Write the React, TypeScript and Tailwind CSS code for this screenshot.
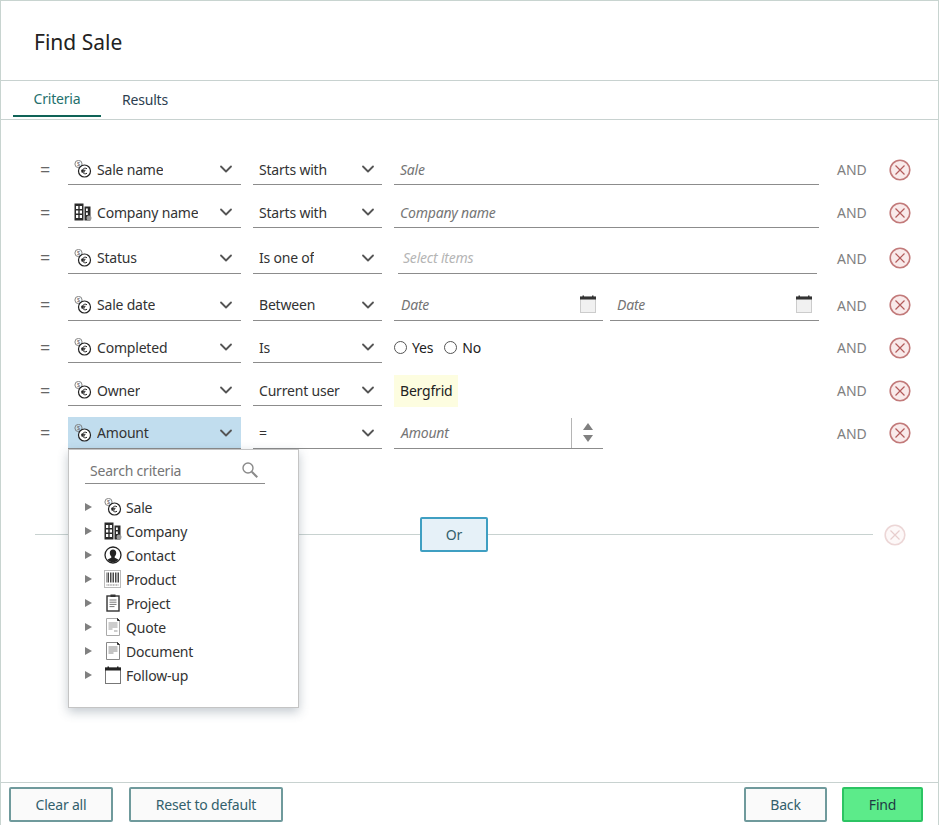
import { ChevronDown } from 'lucide-react'
import type { ReactNode } from 'react'

function CoinsIcon() {
  return (
    <svg width="18" height="18" viewBox="0 0 18 18" className="shrink-0" fill="none">
      <circle cx="4.500" cy="4" r="3.600" stroke="#777" strokeWidth="0.900" />
      <text x="4.500" y="6" fontSize="5.500" textAnchor="middle" fill="#666" fontFamily="Liberation Sans, sans-serif">$</text>
      <circle cx="10.500" cy="11" r="6" fill="#fff" stroke="#222" strokeWidth="1.200" />
      <path d="M13 8.800a2.800 2.800 0 0 0-4.400 1.200v2a2.800 2.800 0 0 0 4.400 1.200M7 10.300h4.500M7 11.800h4" stroke="#222" strokeWidth="1" />
    </svg>
  )
}

function BuildingIcon() {
  return (
    <svg width="18" height="18" viewBox="0 0 18 18" className="shrink-0">
      <path d="M0.500 0.500h9v17h-9z" fill="#2b2b2b" />
      <path d="M10.500 3.500h6v14h-6z" fill="#2b2b2b" />
      <path d="M2 3h2.300v3H2zM5.700 3H8v3H5.700zM2 7.500h2.300v3H2zM5.700 7.500H8v3H5.700zM2 12h2.300v3H2zM5.700 12H8v3H5.700zM12 5.500h1.800v2.500H12zM12 9.500h1.800V12H12z" fill="#fff" />
      <circle cx="15" cy="15" r="2.500" fill="#999" />
    </svg>
  )
}

function ContactIcon() {
  return (
    <svg width="18" height="18" viewBox="0 0 18 18" className="shrink-0">
      <circle cx="9" cy="9" r="8" fill="#fff" stroke="#222" strokeWidth="1.300" />
      <path d="M9 3.500c2 0 3.200 1.500 3.200 3.500 0 1.500-.7 2.800-1.500 3.500v1.200c1.500.5 3 1.200 3.800 2.300a8 8 0 0 1-11 0c.8-1.100 2.300-1.800 3.800-2.300v-1.200C6.500 9.800 5.800 8.500 5.800 7c0-2 1.200-3.500 3.200-3.500z" fill="#222" />
    </svg>
  )
}

function BarcodeIcon() {
  return (
    <svg width="18" height="18" viewBox="0 0 18 18" className="shrink-0">
      <rect x="0.500" y="0.500" width="16" height="17" fill="#fff" stroke="#bbb" />
      <path d="M3 2.500v10M4.500 2.500v10M6.500 2.500v10M8 2.500v10M9.500 2.500v10M11.500 2.500v10M13 2.500v10M14.500 2.500v10" stroke="#333" strokeWidth="0.900" />
      <path d="M2.500 15h12" stroke="#777" strokeWidth="1.200" strokeDasharray="1 0.600" />
    </svg>
  )
}

function ProjectIcon() {
  return (
    <svg width="18" height="18" viewBox="0 0 18 18" className="shrink-0" fill="none">
      <rect x="3" y="2" width="12" height="15" fill="#fff" stroke="#333" strokeWidth="1.400" />
      <rect x="6.500" y="0.500" width="5" height="2.500" fill="#333" />
      <path d="M5.500 6h7M5.500 8.200h7M5.500 10.400h7M5.500 12.600h5" stroke="#777" />
    </svg>
  )
}

function QuoteIcon() {
  return (
    <svg width="18" height="18" viewBox="0 0 18 18" className="shrink-0" fill="none">
      <path d="M2.500.500h11l2 2v15h-13z" fill="#fff" stroke="#aaa" />
      <path d="M13.500 .500l2 2h-2z" fill="#333" stroke="#333" />
      <path d="M4.500 5h9M4.500 7h9M4.500 9h9M4.500 11h4M10 13h3.500" stroke="#999" />
    </svg>
  )
}

function DocumentIcon() {
  return (
    <svg width="18" height="18" viewBox="0 0 18 18" className="shrink-0" fill="none">
      <path d="M2.500.500h11l2 2v15h-13z" fill="#fff" stroke="#888" />
      <path d="M13.500 .500l2 2h-2z" fill="#333" stroke="#333" />
      <path d="M4.500 5h9M4.500 7h9M4.500 9h9M4.500 11h5" stroke="#888" />
    </svg>
  )
}

function FollowUpIcon() {
  return (
    <svg width="18" height="18" viewBox="0 0 18 18" className="shrink-0" fill="none">
      <rect x="1.500" y="2" width="15" height="15.500" fill="#fff" stroke="#777" />
      <rect x="1" y="1.500" width="16" height="3" fill="#222" />
      <rect x="3.500" y="0.500" width="1.500" height="2" fill="#222" />
      <rect x="13" y="0.500" width="1.500" height="2" fill="#222" />
    </svg>
  )
}

function CalendarIcon() {
  return (
    <svg width="16" height="18" viewBox="0 0 16 18" className="shrink-0">
      <rect x="0.500" y="2" width="15" height="15.500" fill="#f1f1f1" stroke="#ccc" />
      <rect x="0" y="1.500" width="16" height="3" fill="#333" />
      <rect x="2.500" y="0.500" width="1.500" height="2" fill="#333" />
      <rect x="12" y="0.500" width="1.500" height="2" fill="#333" />
    </svg>
  )
}

function RemoveIcon({ faded }: { faded?: boolean }) {
  return (
    <svg width="22" height="22" viewBox="0 0 22 22" fill="none" className={faded ? 'opacity-30' : ''}>
      <circle cx="11" cy="11" r="9.800" fill="#f9eaea" stroke="#c27a7a" strokeWidth="1.600" />
      <path d="M6.500 6.500l9 9M15.500 6.500l-9 9" stroke="#b35c5c" strokeWidth="1.200" />
    </svg>
  )
}

function Field({ width, children, active }: { width: string; children: ReactNode; active?: boolean }) {
  return (
    <div className={`flex h-full items-center border-b border-[#8c8c8c] ${width} ${active ? 'bg-[#c1ddee]' : ''}`}>
      {children}
    </div>
  )
}

function Select({ width, icon, label, active }: { width: string; icon?: ReactNode; label: string; active?: boolean }) {
  return (
    <Field width={width} active={active}>
      <div className={`flex min-w-0 flex-1 items-center gap-[5px] ${icon ? 'pl-[6px]' : 'pl-[6px]'}`}>
        {icon}
        <span className="truncate text-[#333]">{label}</span>
      </div>
      <ChevronDown size={20} strokeWidth={2.200} className={`shrink-0 text-[#555] ${icon ? 'mr-[5px]' : 'mr-[4px]'}`} />
    </Field>
  )
}

function TextValue({ placeholder }: { placeholder: string }) {
  return (
    <Field width="w-[425px]">
      <span className="pl-[6px] italic text-[#757575]">{placeholder}</span>
    </Field>
  )
}

function DateValue() {
  return (
    <div className="flex h-full w-[425px] gap-[7px]">
      {[0, 1].map((i) => (
        <Field key={i} width="w-[209px]">
          <span className="flex-1 pl-[7px] italic text-[#757575]">Date</span>
          <span className="mr-[7px] mb-[2px]"><CalendarIcon /></span>
        </Field>
      ))}
    </div>
  )
}

function Radio({ label }: { label: string }) {
  return (
    <span className="flex items-center gap-[5px]">
      <span className="h-[13px] w-[13px] rounded-full border border-[#555] bg-white" />
      <span className="text-[#222]">{label}</span>
    </span>
  )
}

function Row({ rowClass, first, second, value, firstIcon = <CoinsIcon />, active }: {
  rowClass: string
  first: string
  second: string
  value: ReactNode
  firstIcon?: ReactNode
  active?: boolean
}) {
  return (
    <div className={`flex items-stretch ${rowClass}`}>
      <span className="w-[67px] self-center pb-[2px] pl-[39px] text-[18px] leading-none text-[#666]">=</span>
      <Select width="w-[173px]" icon={firstIcon} label={first} active={active} />
      <div className="ml-[12px]"><Select width="w-[129px]" label={second} /></div>
      <div className="ml-[12px] w-[425px]">{value}</div>
      <span className="ml-[18px] w-[52px] self-center tracking-normal text-[#808080]">AND</span>
      <span className="self-center"><RemoveIcon /></span>
    </div>
  )
}

const TREE = [
  { label: 'Sale', icon: <CoinsIcon /> },
  { label: 'Company', icon: <BuildingIcon /> },
  { label: 'Contact', icon: <ContactIcon /> },
  { label: 'Product', icon: <BarcodeIcon /> },
  { label: 'Project', icon: <ProjectIcon /> },
  { label: 'Quote', icon: <QuoteIcon /> },
  { label: 'Document', icon: <DocumentIcon /> },
  { label: 'Follow-up', icon: <FollowUpIcon /> },
]

function CriteriaMenu() {
  return (
    <div className="absolute top-[448px] left-[67px] h-[259px] w-[231px] border border-[#c4c4c4] bg-white px-[16px] pt-[7px] shadow-[0_4px_10px_rgba(60,80,100,0.3)]">
      <div className="flex h-[27px] w-[180px] items-center justify-between border-b border-[#8c8c8c] pr-[6px] pl-[5px]">
        <span className="text-[#757575]">Search criteria</span>
        <svg width="18" height="18" viewBox="0 0 18 18" fill="none" stroke="#8a8a8a" strokeWidth="1.400">
          <circle cx="7" cy="7" r="5" />
          <path d="M10.800 10.800l5.500 5.500" strokeWidth="2" />
        </svg>
      </div>
      <ul className="mt-[11px]">
        {TREE.map((item) => (
          <li key={item.label} className="flex h-[24px] items-center">
            <span className="h-0 w-0 border-y-[4.500px] border-l-[7px] border-y-transparent border-l-[#808080]" />
            <span className="mr-[3px] ml-[11px] flex w-[20px] justify-center">{item.icon}</span>
            <span className="text-[#333]">{item.label}</span>
          </li>
        ))}
      </ul>
    </div>
  )
}

function FooterButton({ label, width, primary }: { label: string; width: string; primary?: boolean }) {
  return (
    <button className={`h-[35px] rounded-[2px] border-2 ${width} ${primary ? 'border-[#2cc463] bg-[#5ceb8a] text-[#1f3a44]' : 'border-[#6f9a9c] bg-[#fafafa] text-[#33606c]'}`}>
      {label}
    </button>
  )
}

export default function App() {
  return (
    <div className="relative flex h-[825px] w-[939px] flex-col border-t border-r border-l border-[#c8d4d0] bg-white font-['Noto_Sans',sans-serif] text-[14px] tracking-[-0.2px]">
      <header className="flex h-[80px] shrink-0 items-center border-b border-[#c8d2d0] pt-[5px] pl-[33px] text-[21px] tracking-normal text-[#222]">
        Find Sale
      </header>

      <nav className="flex h-[39px] shrink-0 border-b border-[#c8d2d0] pl-[12px]">
        <div className="flex h-[36px] w-[88px] items-center justify-center border-b-2 border-[#0f6357] pt-[1px] text-[#24706c]">Criteria</div>
        <div className="flex h-[36px] w-[88px] items-center justify-center pt-[1px] text-[#2c3e50]">Results</div>
      </nav>

      <main className="flex-1">
        <Row rowClass="mt-[34px] h-[31px]" first="Sale name" second="Starts with" value={<TextValue placeholder="Sale" />} />
        <Row rowClass="mt-[12px] h-[31px]" first="Company name" firstIcon={<BuildingIcon />} second="Starts with" value={<TextValue placeholder="Company name" />} />
        <Row rowClass="mt-[14px] h-[32px]" first="Status" second="Is one of" value={
          <div className="ml-[4px] h-full w-[419px]">
            <Field width="w-full"><span className="pl-[5px] italic text-[#b5b5b5]">Select items</span></Field>
          </div>
        } />
        <Row rowClass="mt-[15px] h-[32px]" first="Sale date" second="Between" value={<DateValue />} />
        <Row rowClass="mt-[11px] h-[31px]" first="Completed" second="Is" value={
          <div className="flex h-full items-center gap-[11px]"><Radio label="Yes" /><Radio label="No" /></div>
        } />
        <Row rowClass="mt-[12px] h-[31px]" first="Owner" second="Current user" value={
          <div className="flex h-full items-center">
            <span className="flex h-[32px] items-center bg-[#fdfde0] px-[6px] text-[#222]">Bergfrid</span>
          </div>
        } />
        <Row rowClass="mt-[11px] h-[32px]" first="Amount" second="=" active value={
          <Field width="w-[209px]">
            <span className="flex-1 pl-[7px] italic text-[#757575]">Amount</span>
            <div className="flex h-[30px] w-[32px] flex-col items-center justify-center gap-[5px] border-l border-[#b5b5b5]">
              <span className="h-0 w-0 border-x-[5px] border-b-[7px] border-x-transparent border-b-[#808080]" />
              <span className="h-0 w-0 border-x-[5px] border-t-[7px] border-x-transparent border-t-[#808080]" />
            </div>
          </Field>
        } />

        <div className="mt-[68px] flex items-center pl-[34px]">
          <div className="h-px w-[385px] bg-[#c8d2d0]" />
          <button className="h-[35px] w-[68px] rounded-[2px] border-2 border-[#3f9fc2] bg-[#e6f1f8] text-[#33606c]">Or</button>
          <div className="h-px w-[385px] bg-[#c8d2d0]" />
          <span className="ml-[11px]"><RemoveIcon faded /></span>
        </div>
      </main>

      <footer className="flex h-[43px] shrink-0 items-start justify-between border-t border-[#c8d2d0] pt-[4px] pr-[15px] pl-[8px]">
        <div className="flex gap-[16px]">
          <FooterButton label="Clear all" width="w-[104px]" />
          <FooterButton label="Reset to default" width="w-[154px]" />
        </div>
        <div className="flex gap-[15px]">
          <FooterButton label="Back" width="w-[83px]" />
          <FooterButton label="Find" width="w-[81px]" primary />
        </div>
      </footer>

      <CriteriaMenu />
    </div>
  )
}
